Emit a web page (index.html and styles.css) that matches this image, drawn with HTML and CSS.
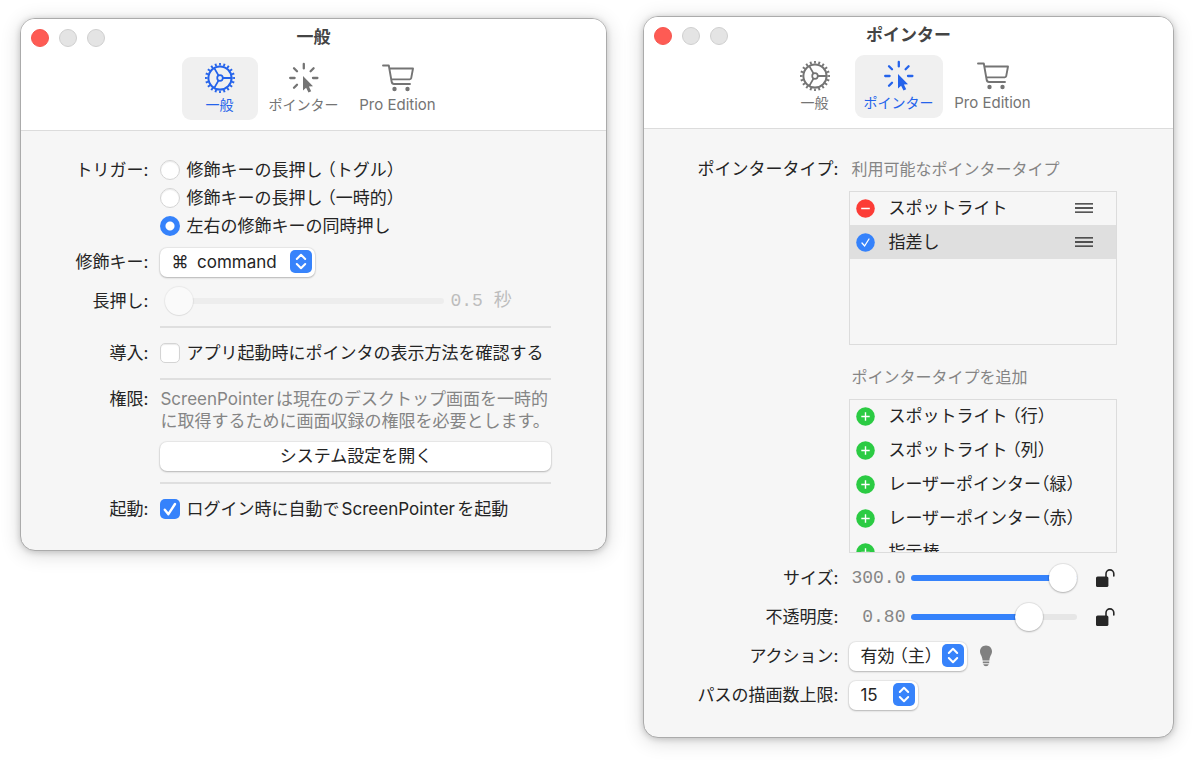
FILE: index.html
```html
<!DOCTYPE html>
<html lang="ja">
<head>
<meta charset="utf-8">
<title>ScreenPointer 設定</title>
<link rel="stylesheet" href="styles.css">
</head>
<body>
<svg class="sprite" aria-hidden="true">
  <symbol id="gear" viewBox="0 0 32 32">
    <g fill="none" stroke="currentColor">
      <circle cx="16" cy="16" r="11.6" stroke-width="2"/>
      <circle cx="16" cy="16" r="13.7" stroke-width="2.6" pathLength="80" stroke-dasharray="1.7 2.3" stroke-dashoffset=".85"/>
      <circle cx="16" cy="16" r="2.8" stroke-width="1.7"/>
      <path d="M18.8 16H27M14.6 13.6L10.3 6.1M14.6 18.4L10.3 25.9" stroke-width="1.8"/>
    </g>
  </symbol>
  <symbol id="rays" viewBox="0 0 32 32">
    <path d="M15.800 2V6.400M6 6.200L9 9.200M2.200 16H6.600M6 25.800L9 22.800M25.600 6.200L22.600 9.200M25 16H29.400" fill="none" stroke="currentColor" stroke-width="2.300" stroke-linecap="round"/>
    <path d="M15 14V28.600L18.100 25.800L20.500 30.600L23.200 29.300L20.900 24.600L25 24.200Z" fill="currentColor"/>
  </symbol>
  <symbol id="cart" viewBox="0 0 32 32">
    <path d="M1 3.500H6.800L9.600 19.500Q10 22 12 22H28M7.400 6.500H31L29.200 16.200Q29 17.200 27.800 17.300L9.400 17.400" fill="none" stroke="currentColor" stroke-width="1.900" stroke-linecap="round" stroke-linejoin="round"/>
    <circle cx="12.500" cy="27" r="2.200" fill="currentColor"/>
    <circle cx="25.500" cy="27" r="2.200" fill="currentColor"/>
  </symbol>
  <symbol id="updown" viewBox="0 0 22 23">
    <rect width="22" height="23" rx="5" fill="#3783fb"/>
    <path d="M6.800 9L11 4.800L15.200 9M6.800 14L11 18.200L15.200 14" fill="none" stroke="#fff" stroke-width="2" stroke-linecap="round" stroke-linejoin="round"/>
  </symbol>
  <symbol id="minus" viewBox="0 0 19 19">
    <circle cx="9.500" cy="9.500" r="9.300" fill="#fc3c36"/>
    <path d="M5.200 9.500H13.800" stroke="#fff" stroke-width="1.400"/>
  </symbol>
  <symbol id="check" viewBox="0 0 19 19">
    <circle cx="9.500" cy="9.500" r="9.300" fill="#3582fb"/>
    <path d="M6 10L8.600 13L13 6" fill="none" stroke="#fff" stroke-width="1.300" stroke-linecap="round"/>
  </symbol>
  <symbol id="plus" viewBox="0 0 19 19">
    <circle cx="9.500" cy="9.500" r="9.300" fill="#2bcb43"/>
    <path d="M5.300 9.500H13.700M9.500 5.300V13.700" stroke="#fff" stroke-width="1.400"/>
  </symbol>
  <symbol id="grip" viewBox="0 0 18 12">
    <path d="M0 1.800H18M0 6H18M0 10.200H18" stroke="#222" stroke-width="1.300"/>
  </symbol>
  <symbol id="unlock" viewBox="0 0 20 20">
    <rect x="1" y="8.500" width="12.400" height="10.500" rx="1.600" fill="#272727"/>
    <path d="M11 9V5.800A3.900 3.900 0 0 1 18.800 5.800V8" fill="none" stroke="#272727" stroke-width="1.600" stroke-linecap="round"/>
  </symbol>
  <symbol id="bulb" viewBox="0 0 14 22">
    <path d="M7 .500C3.200 .500 1 3.300 1 6.500C1 9.600 3.200 10.600 3.600 15.500H10.400C10.800 10.600 13 9.600 13 6.500C13 3.300 10.800 .500 7 .500ZM3.800 16.500H10.200V18.300H3.800ZM4.200 19.200H9.800Q9.300 21.300 7 21.300Q4.700 21.300 4.200 19.200Z" fill="#808080"/>
  </symbol>
</svg>
<main class="desktop">
  <section class="window window-general">
    <header class="titlebar">
      <div class="lights">
        <button class="light close" aria-label="閉じる"></button>
        <button class="light" aria-label="しまう" disabled></button>
        <button class="light" aria-label="拡大" disabled></button>
      </div>
      <h1 class="title">一般</h1>
      <nav class="tabs">
        <button class="tab active"><svg class="tab-icon"><use href="#gear"/></svg>一般</button>
        <button class="tab"><svg class="tab-icon"><use href="#rays"/></svg>ポインター</button>
        <button class="tab tab-latin"><svg class="tab-icon"><use href="#cart"/></svg>Pro Edition</button>
      </nav>
    </header>
    <form class="form form-general">
      <span class="label label-short" id="trigger">トリガー:</span>
      <div class="radios" role="radiogroup" aria-labelledby="trigger">
        <label class="choice"><input class="radio" type="radio" name="trigger">修飾キーの長押し （トグル）</label>
        <label class="choice"><input class="radio" type="radio" name="trigger">修飾キーの長押し （一時的）</label>
        <label class="choice"><input class="radio" type="radio" name="trigger" checked>左右の修飾キーの同時押し</label>
      </div>

      <label class="label" for="modifier">修飾キー:</label>
      <div class="popup popup-wide">
        <select id="modifier"><option>⌘&ensp;command</option></select>
        <svg class="popup-arrows"><use href="#updown"/></svg>
      </div>

      <label class="label" for="hold">長押し:</label>
      <div class="slider-row hold">
        <input class="slider" id="hold" type="range" min="0" max="3" value="0" disabled>
        <output class="number" for="hold">0.5 秒</output>
      </div>

      <hr class="rule">

      <span class="label">導入:</span>
      <label class="choice"><input class="checkbox" type="checkbox">アプリ起動時にポインタの表示方法を確認する</label>

      <hr class="rule">

      <span class="label label-para">権限:</span>
      <div class="permission">
        <p class="note">ScreenPointerは現在のデスクトップ画面を一時的<br>に取得するために画面収録の権限を必要とします。</p>
        <button class="push" type="button">システム設定を開く</button>
      </div>

      <hr class="rule">

      <span class="label">起動:</span>
      <label class="choice"><input class="checkbox" type="checkbox" checked>ログイン時に自動でScreenPointerを起動</label>
    </form>
  </section>

  <section class="window window-pointer">
    <header class="titlebar">
      <div class="lights">
        <button class="light close" aria-label="閉じる"></button>
        <button class="light" aria-label="しまう" disabled></button>
        <button class="light" aria-label="拡大" disabled></button>
      </div>
      <h1 class="title">ポインター</h1>
      <nav class="tabs">
        <button class="tab"><svg class="tab-icon"><use href="#gear"/></svg>一般</button>
        <button class="tab active"><svg class="tab-icon"><use href="#rays"/></svg>ポインター</button>
        <button class="tab tab-latin"><svg class="tab-icon"><use href="#cart"/></svg>Pro Edition</button>
      </nav>
    </header>
    <form class="form form-pointer">
      <span class="label">ポインタータイプ:</span>
      <div class="types">
        <h2 class="caption">利用可能なポインタータイプ</h2>
        <ul class="list">
          <li class="item"><svg class="badge"><use href="#minus"/></svg>スポットライト<svg class="grip"><use href="#grip"/></svg></li>
          <li class="item selected"><svg class="badge"><use href="#check"/></svg>指差し<svg class="grip"><use href="#grip"/></svg></li>
        </ul>
        <h2 class="caption">ポインタータイプを追加</h2>
        <ul class="list">
          <li class="item"><svg class="badge"><use href="#plus"/></svg>スポットライト （行）</li>
          <li class="item"><svg class="badge"><use href="#plus"/></svg>スポットライト （列）</li>
          <li class="item"><svg class="badge"><use href="#plus"/></svg>レーザーポインター（緑）</li>
          <li class="item"><svg class="badge"><use href="#plus"/></svg>レーザーポインター（赤）</li>
          <li class="item"><svg class="badge"><use href="#plus"/></svg>指示棒</li>
        </ul>
      </div>

      <label class="label" for="size">サイズ:</label>
      <div class="slider-row">
        <output class="number" for="size">300.0</output>
        <input class="slider" id="size" type="range" min="10" max="300" value="300" style="--fill: 100%">
        <button class="lock" type="button" aria-label="サイズのロック"><svg><use href="#unlock"/></svg></button>
      </div>

      <label class="label" for="opacity">不透明度:</label>
      <div class="slider-row">
        <output class="number" for="opacity">0.80</output>
        <input class="slider" id="opacity" type="range" min="20" max="100" value="80" style="--fill: 71%">
        <button class="lock" type="button" aria-label="不透明度のロック"><svg><use href="#unlock"/></svg></button>
      </div>

      <label class="label" for="action">アクション:</label>
      <div class="action-row">
        <div class="popup popup-medium">
          <select id="action"><option>有効 （主）</option></select>
          <svg class="popup-arrows"><use href="#updown"/></svg>
        </div>
        <svg class="bulb"><use href="#bulb"/></svg>
      </div>

      <label class="label" for="paths">パスの描画数上限:</label>
      <div class="popup popup-small">
        <select id="paths"><option>15</option></select>
        <svg class="popup-arrows"><use href="#updown"/></svg>
      </div>
    </form>
  </section>
</main>
</body>
</html>
```
FILE: styles.css
```css
* {
  box-sizing: border-box;
}

body {
  margin: 0;
  background: #fff;
  color: #242424;
  font: 17px/30px Inter, "Noto Sans CJK JP", sans-serif;
  font-feature-settings: "halt";
  text-autospace: normal;
}

button,
select,
input {
  margin: 0;
  padding: 0;
  border: 0;
  color: inherit;
  font: inherit;
  font-feature-settings: inherit;
}

svg {
  display: block;
  flex: none;
}

.sprite {
  position: absolute;
  width: 0;
  height: 0;
}

.desktop {
  display: grid;
  grid-template-columns: 587fr 531fr;
  align-items: start;
  gap: 36px;
  padding: 16px 26px 35px 20px;
}

.window {
  border: 1px solid #ababab;
  border-radius: 15px;
  background: #f6f6f6;
  box-shadow: 0 1px 6px rgba(0, 0, 0, .18), 0 3px 20px rgba(0, 0, 0, .16);
  overflow: hidden;
}

.window-general {
  margin-top: 2px;
}

.titlebar {
  display: grid;
  grid-template-columns: 1fr auto 1fr;
  align-items: center;
  row-gap: 1px;
  padding: 0 10px 10px;
  border-bottom: 1px solid #dcdcdc;
  background: #fff;
}

.lights {
  display: flex;
  gap: 10px;
}

.light {
  width: 18px;
  height: 18px;
  border: 1px solid #cfcfcf;
  border-radius: 50%;
  background: #e4e4e4;
}

.light.close {
  border-color: #f5564f;
  background: #fe5b54;
}

.title {
  margin: 0;
  color: #444;
  font-size: 17px;
  line-height: 37px;
  font-weight: 700;
}

.tabs {
  grid-column: 1 / -1;
  display: flex;
  justify-content: center;
  gap: 2px;
}

.tab {
  display: flex;
  flex-direction: column;
  align-items: center;
  min-width: 76px;
  height: 63px;
  padding: 5px 9px 0;
  border-radius: 9px;
  background: none;
  color: #747474;
  font-size: 14px;
  line-height: 21px;
}

.tab.active {
  background: #f0f0f0;
  color: #2463eb;
}

.tab-latin {
  min-width: 96px;
  font-size: 15px;
}

.tab-icon {
  width: 32px;
  height: 32px;
}

.form {
  display: grid;
  justify-content: center;
}

.form-general {
  grid-template-columns: max-content 391px;
  column-gap: 12px;
  padding: 25px 24px 26px;
}

.form-pointer {
  grid-template-columns: max-content 268px;
  column-gap: 11px;
  row-gap: 9px;
  padding: 25px 26px 27px 24px;
}

.label {
  text-align: right;
  white-space: nowrap;
}

.label-short {
  line-height: 28px;
}

.label-para {
  line-height: 22px;
}

.radios {
  display: grid;
  grid-auto-rows: 28px;
  margin-bottom: 7px;
}

.choice {
  display: flex;
  align-items: center;
  gap: 6px;
  white-space: nowrap;
}

.radio,
.checkbox {
  flex: none;
  appearance: none;
  width: 20px;
  height: 20px;
  border: 1px solid #d4d4d4;
  background: #fff;
  box-shadow: inset 0 1px 1px rgba(0, 0, 0, .08);
}

.radio {
  border-radius: 50%;
}

.checkbox {
  border-radius: 5px;
}

.radio:checked {
  border: 0;
  background: radial-gradient(circle, #fff 4px, #3582fb 5px);
  box-shadow: none;
}

.checkbox:checked {
  border: 0;
  background: #3582fb url("data:image/svg+xml,%3Csvg xmlns='http://www.w3.org/2000/svg' viewBox='0 0 20 20'%3E%3Cpath d='M4.800 10.800L8.400 15.200L15 5' fill='none' stroke='white' stroke-width='2.400' stroke-linecap='round' stroke-linejoin='round'/%3E%3C/svg%3E");
  box-shadow: none;
}

.popup {
  position: relative;
  height: 30px;
}

.popup select {
  appearance: none;
  width: 100%;
  height: 29px;
  padding: 0 11px;
  border-radius: 7px;
  background: #fff;
  box-shadow: 0 0 1px 1px rgba(0, 0, 0, .06), 0 1px 2px rgba(0, 0, 0, .22);
  line-height: 29px;
}

.popup-arrows {
  position: absolute;
  top: 3px;
  right: 3px;
  width: 22px;
  height: 23px;
  pointer-events: none;
}

.popup-wide {
  width: 155px;
}

.popup-medium {
  width: 118px;
}

.popup-small {
  width: 69px;
}

.slider-row {
  display: flex;
  align-items: center;
  gap: 6px;
}

.hold {
  margin: 9px 0 10px;
  padding-left: 5px;
}

.label[for="hold"] {
  margin-top: 9px;
}

.hold .slider {
  flex: none;
  width: 279px;
}

.hold .number {
  color: #bdbdbd;
}

.number {
  min-width: 56px;
  color: #858585;
  font-family: "Liberation Mono", "Noto Sans CJK JP", monospace;
  font-size: 18px;
  text-align: right;
  white-space: nowrap;
}

.slider {
  --fill: 0%;
  flex: 1;
  min-width: 0;
  appearance: none;
  height: 30px;
  background: none;
}

.slider::-webkit-slider-runnable-track {
  height: 6px;
  border-radius: 3px;
  background: linear-gradient(to right, #3582fb var(--fill), #e6e6e6 var(--fill));
}

.slider::-webkit-slider-thumb {
  appearance: none;
  width: 28px;
  height: 28px;
  margin-top: -11px;
  border-radius: 50%;
  background: #fff;
  box-shadow: 0 0 1px 1px rgba(0, 0, 0, .08), 0 1px 2px rgba(0, 0, 0, .22);
}

.slider:disabled::-webkit-slider-runnable-track {
  background: #ededed;
}

.slider:disabled::-webkit-slider-thumb {
  background: #fafafa;
  box-shadow: 0 0 1px 1px rgba(0, 0, 0, .05), 0 1px 1px rgba(0, 0, 0, .06);
}

.rule {
  grid-column: 2;
  width: 100%;
  height: 2px;
  margin: 0 0 10px;
  border: 0;
  background: #dfdfdf;
}

.choice + .rule {
  margin: 10px 0 8px;
}

.permission {
  display: grid;
  gap: 10px;
}

.permission + .rule {
  margin: 11px 0 10px;
}

.note {
  margin: 0;
  color: #858585;
  line-height: 22px;
  white-space: nowrap;
}

.push {
  height: 29px;
  border-radius: 7px;
  background: #fff;
  box-shadow: 0 0 1px 1px rgba(0, 0, 0, .06), 0 1px 2px rgba(0, 0, 0, .22);
  line-height: 29px;
}

.types {
  display: grid;
  gap: 7px;
  margin-bottom: 1px;
}

.caption {
  margin: 0;
  padding-left: 2px;
  color: #858585;
  font-size: 16px;
  line-height: 30px;
  font-weight: 400;
}

.list {
  height: 154px;
  margin: 0;
  padding: 0;
  outline: 1px solid #dcdcdc;
  outline-offset: -1px;
  list-style: none;
  overflow: hidden;
}

.list + .caption {
  margin-top: 10px;
}

.item {
  display: flex;
  align-items: center;
  gap: 13px;
  height: 34px;
  padding: 0 24px 0 7px;
  white-space: nowrap;
}

.item.selected {
  background: #dfdfdf;
}

.badge {
  width: 19px;
  height: 19px;
}

.grip {
  width: 18px;
  height: 12px;
  margin-left: auto;
}

.lock {
  margin: 0 2px 0 12px;
  background: none;
}

.lock svg {
  width: 20px;
  height: 20px;
}

.action-row {
  display: flex;
  align-items: center;
  gap: 12px;
}

.bulb {
  width: 14px;
  height: 22px;
}
```
